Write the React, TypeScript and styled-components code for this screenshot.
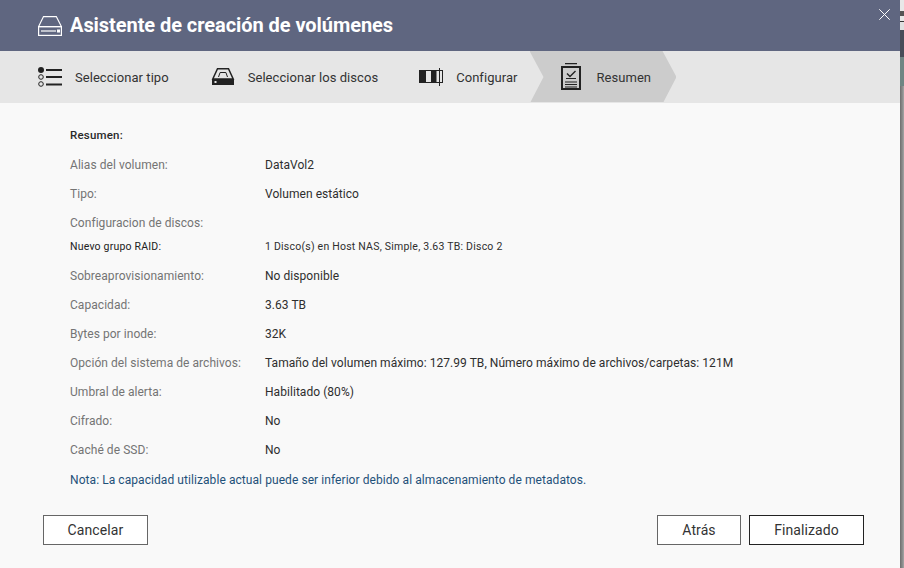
import React from "react";
import styled, { createGlobalStyle } from "styled-components";

const Global = createGlobalStyle`
  html, body { margin: 0; padding: 0; width: 904px; height: 568px; overflow: hidden; background: #808080; }
  * { box-sizing: border-box; }
  #root { width: 904px; height: 568px; font-family: Roboto, "Liberation Sans", sans-serif; }
`;

const Page = styled.div`
  display: flex;
  width: 904px;
  height: 568px;
`;

const Dialog = styled.div`
  width: 900px;
  height: 568px;
  display: flex;
  flex-direction: column;
  background: #f9f9f9;
`;

const Backdrop = styled.div`
  width: 4px;
  height: 568px;
  display: flex;
  flex-direction: column;
`;

const BackdropPiece = styled.div<{ $h: number; $c: string }>`
  height: ${(p) => p.$h}px;
  flex: none;
  background: ${(p) => p.$c};
`;

const BackdropRest = styled.div`
  flex: 1;
  background: linear-gradient(90deg, #6e6e6e 0%, #8c8c8c 60%, #a6a6a6 100%);
`;

const Header = styled.header`
  height: 51px;
  flex: none;
  background: #5f6680;
  display: flex;
  align-items: center;
  padding: 0 10px 0 38px;
  color: #fff;
`;

const Title = styled.h1`
  margin: 0 0 0 8px;
  font-size: 20px;
  font-weight: 700;
  line-height: 51px;
  letter-spacing: -0.06px;
  flex: 1;
  white-space: nowrap;
`;

const CloseButton = styled.button`
  align-self: flex-start;
  margin-top: 9px;
  width: 11px;
  height: 11px;
  padding: 0;
  border: 0;
  background: none;
  display: flex;
`;

const Stepper = styled.nav`
  height: 52px;
  flex: none;
  background: #e6e6e6;
  display: flex;
  padding: 0 0 1px 38px;
  color: #333;
`;

const Step = styled.div<{ $active?: boolean }>`
  display: flex;
  align-items: center;
  gap: ${(p) => (p.$active ? 16 : 13)}px;
  height: 51px;
  font-size: 13px;
  letter-spacing: 0.05px;
  white-space: nowrap;
  margin-right: ${(p) => (p.$active ? 0 : 41)}px;
  &:first-child {
    margin-right: 42px;
  }
  ${(p) =>
    p.$active
      ? `
    margin-left: -29px;
    padding: 0 25px 0 31px;
    background: #cccccc;
    clip-path: polygon(0 0, 133px 0, 147px 26px, 134px 51px, 1px 51px, 14px 26px);
  `
      : ""}
`;

const StepLabel = styled.span`
  padding-top: 2px;
`;

const Body = styled.main`
  flex: 1;
  display: flex;
  flex-direction: column;
  padding: 18px 36px 23px 43px;
  min-height: 0;
`;

const Summary = styled.div`
  padding-left: 27px;
  flex: 1;
  display: flex;
  flex-direction: column;
`;

const Row = styled.div`
  display: flex;
  align-items: center;
  height: 29px;
  flex: none;
  font-size: 12px;
  letter-spacing: 0.05px;
  white-space: nowrap;
`;

const HeadingRow = styled(Row)`
  padding-bottom: 1px;
`;

const RaidRow = styled(Row)`
  height: 24px;
  padding-bottom: 5px;
`;

const Label = styled.span`
  width: 195px;
  flex: none;
  color: #747474;
`;

const StrongLabel = styled(Label)`
  font-weight: 500;
  color: #2a2a2a;
  font-size: 11.5px;
  letter-spacing: 0.2px;
`;

const SmallLabel = styled(Label)`
  font-size: 10.5px;
  letter-spacing: 0.2px;
  color: #222;
`;

const Value = styled.span`
  color: #2e2e2e;
`;

const SmallValue = styled(Value)`
  font-size: 10.5px;
  letter-spacing: 0.225px;
`;

const Note = styled.div`
  height: 31px;
  flex: none;
  display: flex;
  align-items: center;
  font-size: 12px;
  letter-spacing: 0.07px;
  color: #1f5179;
  white-space: nowrap;
`;

const Footer = styled.footer`
  display: flex;
  gap: 8px;
  flex: none;
`;

const ActionButton = styled.button<{ $w: number; $primary?: boolean }>`
  width: ${(p) => p.$w}px;
  height: 30px;
  background: #fff;
  border: 1px solid ${(p) => (p.$primary ? "#222" : "#666")};
  color: #333;
  font-family: inherit;
  font-size: 14px;
  letter-spacing: 0.1px;
  padding: 0;
`;

const Spacer = styled.div`
  flex: 1;
`;

const VolumeIcon = () => (
  <svg width="24" height="20" viewBox="0 0 24 20" fill="none" stroke="#fff" strokeWidth="1.2">
    <path d="M5.5.6h12.8L23.4 10.6H.6z" />
    <rect x=".6" y="10.6" width="22.8" height="8.8" />
    <path d="M3 15h15" />
    <rect x="19" y="13.5" width="3" height="3" fill="#fff" stroke="none" />
  </svg>
);

const TypeIcon = () => (
  <svg width="24" height="20" viewBox="0 0 24 20" fill="none" stroke="#222">
    <circle cx="3" cy="3" r="3" fill="#222" stroke="none" />
    <circle cx="3" cy="10" r="2.3" strokeWidth="1" />
    <circle cx="3" cy="17" r="2.3" strokeWidth="1" />
    <path d="M8 3h16M8 10h16M8 17.5h16" strokeWidth="2" />
  </svg>
);

const DiskIcon = () => (
  <svg width="24" height="18" viewBox="0 0 24 18" fill="none" stroke="#222">
    <path d="M6.5.8h11l4.7 10.2H1.8z" strokeWidth="1.5" />
    <path d="M7.5 9l1.6-4.5h5.8L16.5 9" strokeWidth="1" />
    <path d="M1 11h22v6H1z" fill="#222" stroke="none" />
    <rect x="3.5" y="13" width="2" height="2" fill="#e6e6e6" stroke="none" />
  </svg>
);

const ConfigIcon = () => (
  <svg width="24" height="18" viewBox="0 0 24 18" fill="none">
    <rect x="0" y="2" width="7" height="13" fill="#222" />
    <rect x="12" y="2" width="5" height="13" fill="#222" />
    <rect x="17" y="2.5" width="6.5" height="12" stroke="#222" />
    <path d="M7 2.5h5M7 14.5h5" stroke="#222" />
    <path d="M20.5 0v18" stroke="#222" />
  </svg>
);

const SummaryIcon = () => (
  <svg width="20" height="27" viewBox="0 0 20 27" fill="none" stroke="#222">
    <path d="M4 .7h12" strokeWidth="1.3" />
    <rect x="1" y="4" width="18" height="22" strokeWidth="2" />
    <path d="M6 10.5l3 3 5.5-5.5" strokeWidth="1.4" />
    <path d="M5 15.5h10M4 19h12M4 21.5h12M4 24h12" strokeWidth="1" />
  </svg>
);

const CloseIcon = () => (
  <svg width="11" height="11" viewBox="0 0 11 11" fill="none" stroke="#fff" strokeWidth="1">
    <path d="M.3.3l10.4 10.4M10.7.3L.3 10.7" />
  </svg>
);

const rows: [string, string][] = [
  ["Sobreaprovisionamiento:", "No disponible"],
  ["Capacidad:", "3.63 TB"],
  ["Bytes por inode:", "32K"],
  ["Opción del sistema de archivos:", "Tamaño del volumen máximo: 127.99 TB, Número máximo de archivos/carpetas: 121M"],
  ["Umbral de alerta:", "Habilitado (80%)"],
  ["Cifrado:", "No"],
  ["Caché de SSD:", "No"],
];

export default function App() {
  return (
    <Page>
      <Global />
      <Dialog>
        <Header>
          <VolumeIcon />
          <Title>Asistente de creación de volúmenes</Title>
          <CloseButton aria-label="Cerrar">
            <CloseIcon />
          </CloseButton>
        </Header>
        <Stepper>
          <Step>
            <TypeIcon />
            <StepLabel>Seleccionar tipo</StepLabel>
          </Step>
          <Step>
            <DiskIcon />
            <StepLabel>Seleccionar los discos</StepLabel>
          </Step>
          <Step>
            <ConfigIcon />
            <StepLabel>Configurar</StepLabel>
          </Step>
          <Step $active>
            <SummaryIcon />
            <StepLabel>Resumen</StepLabel>
          </Step>
        </Stepper>
        <Body>
          <Summary>
            <HeadingRow>
              <StrongLabel>Resumen:</StrongLabel>
            </HeadingRow>
            <Row>
              <Label>Alias del volumen:</Label>
              <Value>DataVol2</Value>
            </Row>
            <Row>
              <Label>Tipo:</Label>
              <Value>Volumen estático</Value>
            </Row>
            <Row>
              <Label>Configuracion de discos:</Label>
            </Row>
            <RaidRow>
              <SmallLabel>Nuevo grupo RAID:</SmallLabel>
              <SmallValue>1 Disco(s) en Host NAS, Simple, 3.63 TB: Disco 2</SmallValue>
            </RaidRow>
            {rows.map(([label, value]) => (
              <Row key={label}>
                <Label>{label}</Label>
                <Value>{value}</Value>
              </Row>
            ))}
            <Note>Nota: La capacidad utilizable actual puede ser inferior debido al almacenamiento de metadatos.</Note>
          </Summary>
          <Footer>
            <ActionButton $w={105}>Cancelar</ActionButton>
            <Spacer />
            <ActionButton $w={84}>Atrás</ActionButton>
            <ActionButton $w={115} $primary>
              Finalizado
            </ActionButton>
          </Footer>
        </Body>
      </Dialog>
      <Backdrop>
        <BackdropPiece $h={11} $c="#e8e8e8" />
        <BackdropPiece $h={5} $c="#555" />
        <BackdropPiece $h={5} $c="#e8e8e8" />
        <BackdropPiece $h={1} $c="#333" />
        <BackdropPiece $h={8} $c="#e0e0e0" />
        <BackdropPiece $h={27} $c="#474c58" />
        <BackdropPiece $h={29} $c="#6f8583" />
        <BackdropRest />
      </Backdrop>
    </Page>
  );
}
